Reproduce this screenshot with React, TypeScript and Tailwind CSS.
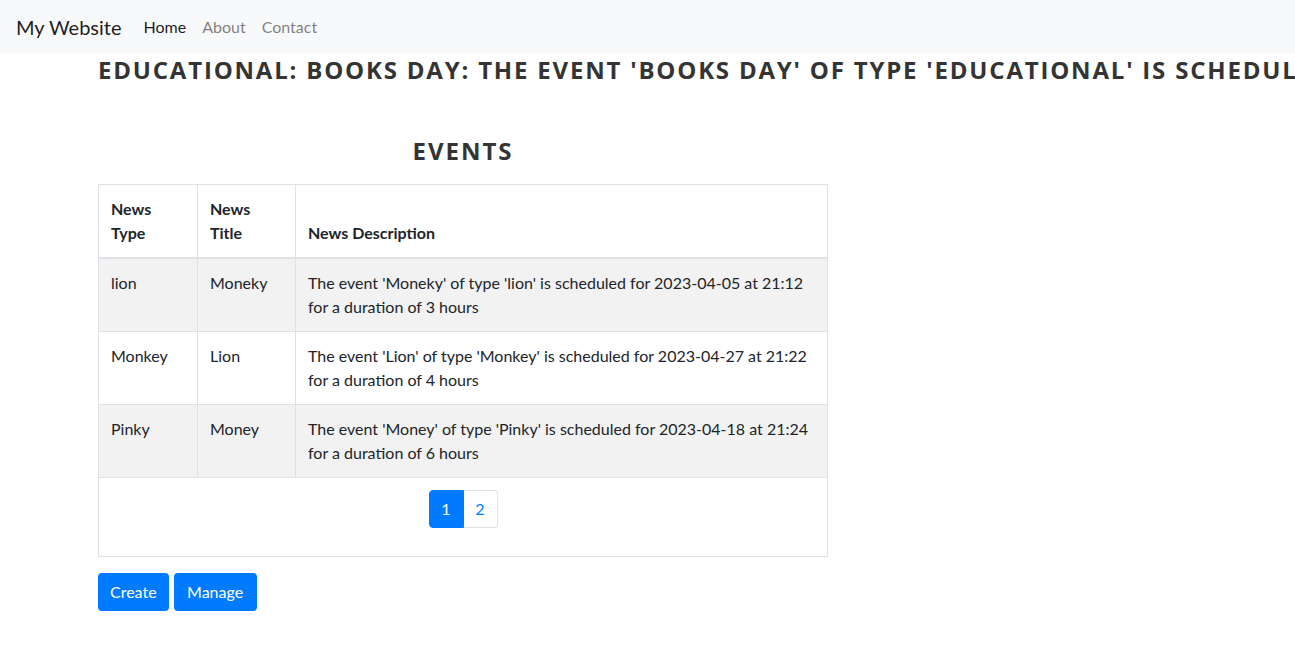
import React from "react";

interface EventRow {
    Type: string;
    Title: string;
    Description: string;
}

const events: EventRow[] = [
    {
        Type: "lion",
        Title: "Moneky",
        Description:
            "The event 'Moneky' of type 'lion' is scheduled for 2023-04-05 at 21:12 for a duration of 3 hours",
    },
    {
        Type: "Monkey",
        Title: "Lion",
        Description:
            "The event 'Lion' of type 'Monkey' is scheduled for 2023-04-27 at 21:22 for a duration of 4 hours",
    },
    {
        Type: "Pinky",
        Title: "Money",
        Description:
            "The event 'Money' of type 'Pinky' is scheduled for 2023-04-18 at 21:24 for a duration of 6 hours",
    },
];

export default function App() {
    return (
        <div
            className="min-h-[650px] w-full overflow-hidden bg-white text-[#212529] text-[16px] leading-[24px]"
            style={{ fontFamily: "Lato, 'Noto Sans', sans-serif" }}
        >
            <nav className="flex items-center h-[54px] bg-[#f8f9fa] px-4">
                <span className="text-[20px] leading-[30px] text-black/90 mr-[22px]">My Website</span>
                <div className="flex gap-4 text-[16px]">
                    <a className="text-black/90">Home</a>
                    <a className="text-black/50">About</a>
                    <a className="text-black/50">Contact</a>
                </div>
            </nav>

            <div className="pl-[98px]">
                <h2
                    className="whitespace-nowrap text-[24px] leading-[32px] font-bold tracking-[1.8px] text-[#343434]"
                    style={{ fontFamily: "'Open Sans', sans-serif" }}
                >
                    EDUCATIONAL: BOOKS DAY: THE EVENT 'BOOKS DAY' OF TYPE 'EDUCATIONAL' IS SCHEDULED FOR 2023-04-20 AT 10:00
                </h2>

                <div className="w-[730px] mt-[49px]">
                    <h3
                        className="text-center text-[24px] leading-[32px] font-bold tracking-[2px] text-[#343434] mb-[17px]"
                        style={{ fontFamily: "'Open Sans', sans-serif" }}
                    >
                        EVENTS
                    </h3>

                    <table className="w-full border-collapse border border-[#dee2e6] table-fixed">
                        <thead>
                            <tr>
                                <th className="w-[99px] border border-[#dee2e6] border-b-2 p-3 text-left align-bottom font-bold">
                                    News Type
                                </th>
                                <th className="w-[98px] border border-[#dee2e6] border-b-2 p-3 text-left align-bottom font-bold">
                                    News Title
                                </th>
                                <th className="border border-[#dee2e6] border-b-2 p-3 text-left align-bottom font-bold">
                                    News Description
                                </th>
                            </tr>
                        </thead>
                        <tbody>
                            {events.map((ev, i) => (
                                <tr key={i} className={i % 2 === 0 ? "bg-[#f2f2f2]" : "bg-white"}>
                                    <td className="border border-[#dee2e6] p-3 align-top">{ev.Type}</td>
                                    <td className="border border-[#dee2e6] p-3 align-top">{ev.Title}</td>
                                    <td className="border border-[#dee2e6] p-3 align-top">{ev.Description}</td>
                                </tr>
                            ))}
                            <tr>
                                <td colSpan={3} className="border border-[#dee2e6] pt-3 pb-[28px]">
                                    <div className="flex justify-center">
                                        <div className="flex">
                                            <a className="flex items-center justify-center w-[35px] h-[38px] bg-[#007bff] text-white border border-[#007bff] rounded-l-[4px]">
                                                1
                                            </a>
                                            <a className="flex items-center justify-center w-[34px] h-[38px] bg-white text-[#007bff] border border-[#dee2e6] border-l-0 rounded-r-[4px]">
                                                2
                                            </a>
                                        </div>
                                    </div>
                                </td>
                            </tr>
                        </tbody>
                    </table>
                </div>

                <div className="flex gap-[5px] mt-4">
                    <button className="bg-[#007bff] text-white rounded-[4px] px-3 h-[38px]">Create</button>
                    <button className="bg-[#007bff] text-white rounded-[4px] px-[13px] h-[38px] w-[83px]">Manage</button>
                </div>
            </div>
        </div>
    );
}
